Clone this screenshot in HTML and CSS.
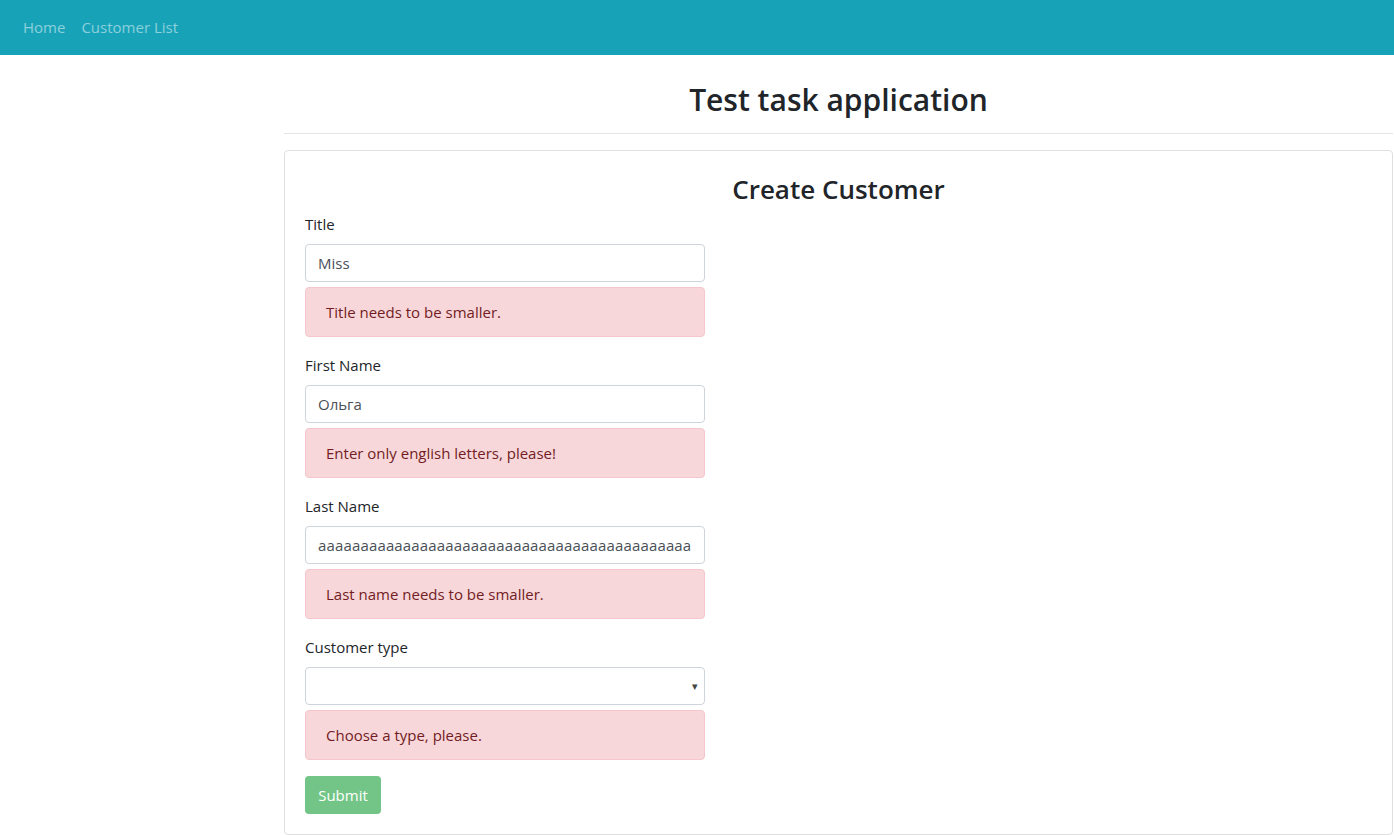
FILE: index.html
```html
<!DOCTYPE html>
<html lang="en">
<head>
<meta charset="utf-8">
<title>Test task application</title>
<link rel="stylesheet" href="styles.css">
</head>
<body>
<nav class="navbar">
  <a class="nav-link" href="#">Home</a>
  <a class="nav-link" href="#">Customer List</a>
</nav>
<main class="main">
  <header class="page-header">
    <h1 class="page-title">Test task application</h1>
  </header>
  <hr class="divider">
  <section class="card">
    <h2 class="card-title">Create Customer</h2>
    <form class="form">
      <div class="form-group">
        <label class="label">Title</label>
        <div class="input">Miss</div>
        <div class="alert">Title needs to be smaller.</div>
      </div>
      <div class="form-group">
        <label class="label">First Name</label>
        <div class="input">Ольга</div>
        <div class="alert">Enter only english letters, please!</div>
      </div>
      <div class="form-group">
        <label class="label">Last Name</label>
        <div class="input input-long">aaaaaaaaaaaaaaaaaaaaaaaaaaaaaaaaaaaaaaaaaaaa</div>
        <div class="alert">Last name needs to be smaller.</div>
      </div>
      <div class="form-group">
        <label class="label">Customer type</label>
        <div class="input select"><span class="caret">&#9662;</span></div>
        <div class="alert">Choose a type, please.</div>
      </div>
      <button type="button" class="btn">Submit</button>
    </form>
  </section>
</main>
</body>
</html>
```

FILE: styles.css
```css
* { box-sizing: border-box; }
html, body { margin: 0; padding: 0; }
body {
  font-family: "Open Sans", "Noto Sans", "Liberation Sans", sans-serif;
  font-size: 15px;
  line-height: 24px;
  color: #212529;
  background: #fff;
}
.navbar {
  height: 55px;
  background: #17a2b8;
  display: flex;
  align-items: center;
  padding: 0 15px 2px 15px;
}
.nav-link {
  color: rgba(255,255,255,0.5);
  text-decoration: none;
  padding: 0 8px;
  font-size: 15px;
}
.main {
  margin-left: 284px;
  padding-right: 1px;
}
.page-header {
  height: 78px;
  display: flex;
  align-items: center;
  justify-content: center;
}
.page-title {
  margin: 0;
  font-size: 30px;
  font-weight: 600;
  line-height: 38px;
  padding-top: 12px;
}
.divider {
  margin: 0 0 16px 0;
  border: 0;
  border-top: 1px solid #e5e5e5;
}
.card {
  border: 1px solid #dfdfdf;
  border-radius: 4px;
  padding: 19px 20px 20px 20px;
}
.card-title {
  margin: 0 0 4px 0;
  text-align: center;
  font-size: 26px;
  font-weight: 600;
  line-height: 38px;
}
.form { width: 400px; }
.form-group { margin-bottom: 16px; }
.label {
  display: block;
  margin-bottom: 8px;
}
.input {
  height: 38px;
  border: 1px solid #ced4da;
  border-radius: 4px;
  padding: 6px 12px;
  color: #495057;
  white-space: nowrap;
  overflow: hidden;
  position: relative;
}
.input-long { letter-spacing: 0.15px; }
.select .caret {
  position: absolute;
  right: 6px;
  top: 6px;
  font-size: 11px;
  color: #444;
}
.alert {
  margin-top: 5px;
  height: 50px;
  border: 1px solid #f5c6cb;
  background: #f8d7da;
  color: #721c24;
  border-radius: 4px;
  padding: 12px 20px;
}
.btn {
  display: block;
  height: 38px;
  width: 76px;
  border: 0;
  border-radius: 4px;
  background: #72c586;
  color: #fff;
  font-family: inherit;
  font-size: 15px;
  padding: 0;
}
```
